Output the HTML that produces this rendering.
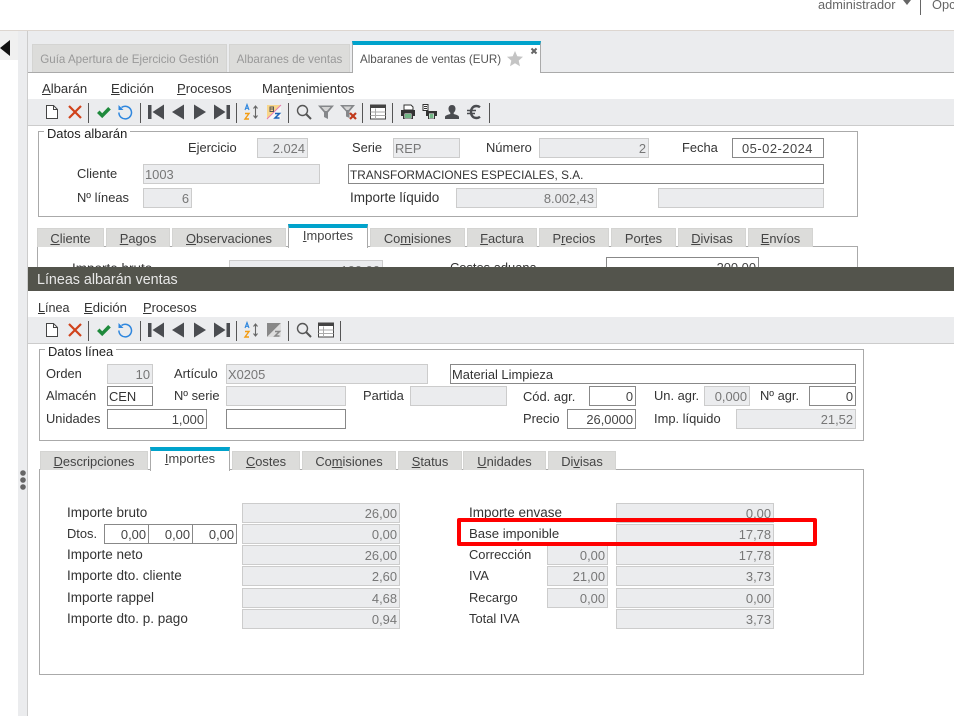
<!DOCTYPE html>
<html><head><meta charset="utf-8"><style>
html,body{margin:0;padding:0;background:#fff}
#p{position:relative;width:954px;height:716px;overflow:hidden;background:#fff;font-family:"Liberation Sans",sans-serif;font-size:12.9px;color:#333}
#p div{position:absolute;box-sizing:border-box}
.l{line-height:16px;white-space:nowrap;height:16px;margin-top:1px}
.i{font-size:13.5px}
.f,.w{height:20px;line-height:20px;border:1px solid #ccc;background:#ebecee;color:#777;padding:0 2px 0 1px;text-align:right;white-space:nowrap;overflow:hidden}
.w{background:#fff;border-color:#888;color:#444}
.tl{text-align:left}
.t,.a{text-align:center;white-space:nowrap;line-height:20px;color:#444}
.t{background:#dcdcda;border:1px solid #d4d4d2;border-bottom:0;height:19px}
.a{background:#fff;border:1px solid #aaa;border-top:4px solid #00a3cc;border-bottom:0;height:24px;line-height:16px}
.g{border:1px solid #aaa}
.m{line-height:16px;color:#333;white-space:nowrap;font-size:13.1px}
.s{font-size:11.6px}
svg{position:absolute;left:0;top:0}
</style></head><body><div id="p">

<div style="left:0;top:30px;width:954px;height:1px;background:#ddd6d0"></div>
<div style="left:0;top:31px;width:18px;height:29px;background:#f0f0f0"></div>
<div style="left:18px;top:31px;width:9px;height:685px;background:#ebecee"></div>
<div style="left:27px;top:31px;width:1px;height:685px;background:#ccc"></div>
<div style="left:28px;top:31px;width:926px;height:41px;background:#ebecee"></div>
<div style="left:28px;top:72px;width:926px;height:1px;background:#aaa"></div>
<div style="left:28px;top:99px;width:926px;height:26px;background:#ebecee"></div>
<div style="left:28px;top:125px;width:926px;height:1px;background:#ccc"></div>

<div class="l" style="left:818px;top:-4px;color:#666;font-size:12.8px">administrador</div>
<div style="left:920px;top:0;width:1px;height:15px;background:#666"></div>
<div class="l" style="left:932px;top:-4px;color:#666;font-size:12.8px">Opc</div>

<div class="t s" style="left:32px;top:44px;width:195px;height:28px;line-height:30px;color:#999">Guía Apertura de Ejercicio Gestión</div>
<div class="t s" style="left:229px;top:44px;width:121px;height:28px;line-height:30px;color:#999">Albaranes de ventas</div>
<div style="left:352px;top:41px;width:189px;height:32px;background:#fff;border:1px solid #aaa;border-top:4px solid #00a3cc;border-bottom:0"></div>
<div class="l s" style="left:360px;top:51px;color:#555">Albaranes de ventas (EUR)</div>

<div class="m" style="left:42px;top:81px"><u>A</u>lbarán</div>
<div class="m" style="left:111px;top:81px"><u>E</u>dición</div>
<div class="m" style="left:177px;top:81px"><u>P</u>rocesos</div>
<div class="m" style="left:262px;top:81px">Man<u>t</u>enimientos</div>

<!-- Datos albaran -->
<div class="g" style="left:38px;top:131px;width:820px;height:86px"></div>
<div class="l" style="left:44px;top:125px;padding:0 3px;background:#fff;color:#222">Datos albarán</div>
<div class="l" style="left:188px;top:139px">Ejercicio</div>
<div class="f" style="left:257px;top:138px;width:51px">2.024</div>
<div class="l" style="left:352px;top:139px">Serie</div>
<div class="f tl" style="left:393px;top:138px;width:67px">REP</div>
<div class="l" style="left:486px;top:139px">Número</div>
<div class="f" style="left:539px;top:138px;width:110px">2</div>
<div class="l" style="left:682px;top:139px">Fecha</div>
<div class="w" style="left:732px;top:138px;width:92px;text-align:center;letter-spacing:.5px">05-02-2024</div>
<div class="l" style="left:77px;top:165px">Cliente</div>
<div class="f tl" style="left:143px;top:164px;width:177px">1003</div>
<div class="w tl" style="left:348px;top:164px;width:476px;color:#333;font-size:11.8px">TRANSFORMACIONES ESPECIALES, S.A.</div>
<div class="l" style="left:77px;top:189px">Nº líneas</div>
<div class="f" style="left:143px;top:188px;width:49px">6</div>
<div class="l i" style="left:350px;top:189px">Importe líquido</div>
<div class="f" style="left:456px;top:188px;width:141px">8.002,43</div>
<div class="f" style="left:658px;top:188px;width:166px"></div>

<!-- Tabs 2 -->
<div class="g" style="left:37px;top:246px;width:821px;height:40px"></div>
<div class="t" style="left:37px;top:228px;width:67px"><u>C</u>liente</div>
<div class="t" style="left:106px;top:228px;width:64px"><u>P</u>agos</div>
<div class="t" style="left:172px;top:228px;width:114px"><u>O</u>bservaciones</div>
<div class="a" style="left:288px;top:224px;width:80px"><u>I</u>mportes</div>
<div class="t" style="left:370px;top:228px;width:95px">Co<u>m</u>isiones</div>
<div class="t" style="left:467px;top:228px;width:70px"><u>F</u>actura</div>
<div class="t" style="left:539px;top:228px;width:70px">P<u>r</u>ecios</div>
<div class="t" style="left:611px;top:228px;width:65px">Por<u>t</u>es</div>
<div class="t" style="left:678px;top:228px;width:68px"><u>D</u>ivisas</div>
<div class="t" style="left:748px;top:228px;width:65px"><u>E</u>nvíos</div>
<div class="l i" style="left:72px;top:260px">Importe bruto</div>
<div class="f" style="left:229px;top:260px;width:154px">100,00</div>
<div class="l" style="left:450px;top:259px">Costes aduana</div>
<div class="w" style="left:606px;top:257px;width:153px">200,00</div>

<!-- Lower window -->
<div style="left:28px;top:267px;width:926px;height:449px;background:#fff"></div>
<div style="left:28px;top:267px;width:926px;height:24px;background:#53544c"></div>
<div style="left:37px;top:272px;color:#e8e8e8;font-size:14.3px;line-height:16px;white-space:nowrap">Líneas albarán ventas</div>
<div class="m" style="left:38px;top:300px;font-size:12.6px"><u>L</u>ínea</div>
<div class="m" style="left:84px;top:300px"><u>E</u>dición</div>
<div class="m" style="left:143px;top:300px;font-size:12.9px"><u>P</u>rocesos</div>
<div style="left:28px;top:317px;width:926px;height:26px;background:#ebecee"></div>
<div style="left:28px;top:343px;width:926px;height:1px;background:#ccc"></div>

<div class="g" style="left:39px;top:349px;width:825px;height:92px"></div>
<div class="l" style="left:45px;top:343px;padding:0 3px;background:#fff;color:#222">Datos línea</div>
<div class="l" style="left:46px;top:365px">Orden</div>
<div class="f" style="left:107px;top:364px;width:46px">10</div>
<div class="l" style="left:174px;top:365px">Artículo</div>
<div class="f tl" style="left:226px;top:364px;width:202px">X0205</div>
<div class="w tl" style="left:450px;top:364px;width:406px;color:#333">Material Limpieza</div>
<div class="l" style="left:46px;top:387px">Almacén</div>
<div class="w tl" style="left:107px;top:386px;width:46px;color:#333">CEN</div>
<div class="l" style="left:174px;top:387px">Nº serie</div>
<div class="f" style="left:226px;top:386px;width:120px"></div>
<div class="l" style="left:363px;top:387px">Partida</div>
<div class="f" style="left:410px;top:386px;width:97px"></div>
<div class="l" style="left:523px;top:388px">Cód. agr.</div>
<div class="w" style="left:589px;top:386px;width:47px">0</div>
<div class="l" style="left:654px;top:387px">Un. agr.</div>
<div class="f" style="left:704px;top:386px;width:46px">0,000</div>
<div class="l" style="left:760px;top:387px">Nº agr.</div>
<div class="w" style="left:809px;top:386px;width:47px">0</div>
<div class="l" style="left:46px;top:410px">Unidades</div>
<div class="w" style="left:107px;top:409px;width:100px">1,000</div>
<div class="w" style="left:226px;top:409px;width:120px"></div>
<div class="l" style="left:523px;top:410px">Precio</div>
<div class="w" style="left:567px;top:409px;width:69px">26,0000</div>
<div class="l" style="left:654px;top:410px">Imp. líquido</div>
<div class="f" style="left:736px;top:409px;width:120px">21,52</div>

<!-- Tabs 3 -->
<div class="g" style="left:39px;top:469px;width:825px;height:206px"></div>
<div class="t" style="left:40px;top:451px;width:108px"><u>D</u>escripciones</div>
<div class="a" style="left:150px;top:447px;width:80px"><u>I</u>mportes</div>
<div class="t" style="left:232px;top:451px;width:68px"><u>C</u>ostes</div>
<div class="t" style="left:302px;top:451px;width:94px">Co<u>m</u>isiones</div>
<div class="t" style="left:398px;top:451px;width:64px"><u>S</u>tatus</div>
<div class="t" style="left:463px;top:451px;width:83px"><u>U</u>nidades</div>
<div class="t" style="left:548px;top:451px;width:68px">Di<u>v</u>isas</div>

<!-- Left amounts -->
<div class="l i" style="left:67px;top:504px">Importe bruto</div>
<div class="f" style="left:242px;top:503px;width:158px">26,00</div>
<div class="l" style="left:67px;top:525px">Dtos.</div>
<div class="w" style="left:104px;top:524px;width:45px">0,00</div>
<div class="w" style="left:148px;top:524px;width:45px">0,00</div>
<div class="w" style="left:192px;top:524px;width:45px">0,00</div>
<div class="f" style="left:242px;top:524px;width:158px">0,00</div>
<div class="l i" style="left:67px;top:546px">Importe neto</div>
<div class="f" style="left:242px;top:545px;width:158px">26,00</div>
<div class="l i" style="left:67px;top:567px">Importe dto. cliente</div>
<div class="f" style="left:242px;top:566px;width:158px">2,60</div>
<div class="l i" style="left:67px;top:589px">Importe rappel</div>
<div class="f" style="left:242px;top:588px;width:158px">4,68</div>
<div class="l i" style="left:67px;top:610px">Importe dto. p. pago</div>
<div class="f" style="left:242px;top:609px;width:158px">0,94</div>

<!-- Right amounts -->
<div class="l i" style="left:469px;top:504px">Importe envase</div>
<div class="f" style="left:616px;top:503px;width:158px">0,00</div>
<div class="l" style="left:469px;top:525px;font-size:13.2px">Base imponible</div>
<div class="f" style="left:616px;top:524px;width:158px">17,78</div>
<div class="l" style="left:469px;top:546px">Corrección</div>
<div class="f" style="left:547px;top:545px;width:61px">0,00</div>
<div class="f" style="left:616px;top:545px;width:158px">17,78</div>
<div class="l" style="left:469px;top:567px">IVA</div>
<div class="f" style="left:547px;top:566px;width:61px">21,00</div>
<div class="f" style="left:616px;top:566px;width:158px">3,73</div>
<div class="l" style="left:469px;top:589px">Recargo</div>
<div class="f" style="left:547px;top:588px;width:61px">0,00</div>
<div class="f" style="left:616px;top:588px;width:158px">0,00</div>
<div class="l" style="left:469px;top:610px">Total IVA</div>
<div class="f" style="left:616px;top:609px;width:158px">3,73</div>

<div style="left:457px;top:518px;width:360px;height:28px;border:4px solid #f00;border-radius:2px"></div>

<svg width="954" height="716" viewBox="0 0 954 716">
<defs>
<symbol id="doc" viewBox="0 0 16 16"><path d="M2.500 1.500h7l4 4v9h-11z" fill="#fff" stroke="#444"/><path d="M9.500 1.500v4h4" fill="none" stroke="#444"/></symbol>
<symbol id="x" viewBox="0 0 16 16"><path d="M2 2l12 12M14 2L2 14" stroke="#d0421b" stroke-width="2.200" fill="none"/></symbol>
<symbol id="ok" viewBox="0 0 16 16"><path d="M1 9l2.500-2.500 2.700 2.700 6-6.200 2.600 2.500-8.600 8.600z" fill="#1f8a3c"/></symbol>
<symbol id="un" viewBox="0 0 16 16"><path d="M4.500 3.500a6.300 6.300 0 1 1-2.600 5" fill="none" stroke="#2e86de" stroke-width="1.500"/><path d="M1.500 1v5h5z" fill="#2e86de"/></symbol>
<symbol id="fi" viewBox="0 0 16 16"><path d="M0 1h3.500v14H0zM16 .5v15L4.500 8z" fill="#4a4c50"/></symbol>
<symbol id="pr" viewBox="0 0 16 16"><path d="M14 .5v15L2 8z" fill="#4a4c50"/></symbol>
<symbol id="ne" viewBox="0 0 16 16"><path d="M2 .5v15L14 8z" fill="#4a4c50"/></symbol>
<symbol id="la" viewBox="0 0 16 16"><path d="M12.500 1H16v14h-3.500zM0 .5v15L11.500 8z" fill="#4a4c50"/></symbol>
<symbol id="az" viewBox="0 0 18 18"><path d="M2 7l2-5.500 2 5.500M2.800 5.300h2.400" fill="none" stroke="#2e86de" stroke-width="1.100"/><path d="M2 10.500h4l-4 5.500h4" fill="none" stroke="#f39c12" stroke-width="1.400"/><path d="M12.500 3v12M10.500 5.500l2-2.500 2 2.500M10.500 12.500l2 2.500 2-2.500" fill="none" stroke="#666" stroke-width="1.100"/></symbol>
<symbol id="za" viewBox="0 0 16 16"><path d="M1 1h14L1 15z" fill="#f8d68a"/><path d="M15 1v14H1z" fill="#f5f5f5"/><path d="M1 15L15 1" stroke="#e87ab0" stroke-width="1"/><path d="M4 3h3.500v4.500H4zM4 5h3" fill="none" stroke="#555" stroke-width="1"/><path d="M9 9.500h4.500L9 14h4.500" fill="none" stroke="#1a62b8" stroke-width="1.500"/></symbol>
<symbol id="zg" viewBox="0 0 16 16"><path d="M1 1h14L1 15z" fill="#888"/><path d="M15 1v14H1z" fill="#ddd"/><path d="M9 9.500h4.500L9 14h4.500" fill="none" stroke="#888" stroke-width="1.500"/></symbol>
<symbol id="se" viewBox="0 0 16 16"><circle cx="6.500" cy="6.500" r="5" fill="none" stroke="#555" stroke-width="1.400"/><path d="M10 10l5 5" stroke="#555" stroke-width="2"/></symbol>
<symbol id="fl" viewBox="0 0 16 16"><path d="M0 1.500h16L10 8.500V15l-4-2V8.500z" fill="#85878a"/><path d="M3.500 3h9L9 7H7z" fill="#d4d4d4"/></symbol>
<symbol id="fx" viewBox="0 0 18 18"><path d="M0 2h15L9.500 8.500V15l-3.500-1.500v-5z" fill="#85878a"/><path d="M3.500 3.500h8L8.500 7h-2z" fill="#d4d4d4"/><path d="M10 10l6 6M16 10l-6 6" stroke="#c0391b" stroke-width="2.200"/></symbol>
<symbol id="tb" viewBox="0 0 16 16"><rect x=".5" y="1" width="15" height="14" fill="#fff" stroke="#444"/><path d="M.5 1h15v3H.5z" fill="#444"/><path d="M.5 8h15M.5 11.500h15M5.500 4.500V15" stroke="#aaa" fill="none"/></symbol>
<symbol id="pt" viewBox="0 0 16 16"><path d="M4 1h7l2 2v3H4z" fill="#fff" stroke="#333"/><path d="M1 6h14v6h-2v3H3v-3H1z" fill="#333"/><rect x="4.500" y="9.500" width="7" height="5" fill="#fff"/><path d="M5 11h6M5 13h6" stroke="#1f8a3c" stroke-width="1.200"/></symbol>
<symbol id="p2" viewBox="0 0 16 16"><path d="M1 .5h5v6H1z" fill="#fff" stroke="#333"/><path d="M2 2.500h3M2 4.500h3" stroke="#333"/><path d="M4 7h11v5h-2v3H6v-3H4z" fill="#333"/><rect x="7" y="9.500" width="5" height="5" fill="#fff"/><path d="M7.500 11h4M7.500 13h4" stroke="#1f8a3c" stroke-width="1.200"/></symbol>
<symbol id="us" viewBox="0 0 16 16"><path d="M8 1c2.300 0 3.500 1.700 3.500 3.800 0 1.800-.8 3.200-1.800 4v1.200c2 .6 5.300 1.300 5.300 3V15H1v-2c0-1.700 3.300-2.400 5.300-3V8.800c-1-.8-1.800-2.200-1.800-4C4.500 2.700 5.700 1 8 1z" fill="#4a4c50"/></symbol>
<symbol id="eu" viewBox="0 0 16 16"><path d="M14 3.200C12.800 2.300 11.500 2 10.300 2 7 2 5 4.600 5 8s2 6 5.300 6c1.200 0 2.500-.3 3.700-1.200" fill="none" stroke="#4a4c50" stroke-width="2.400"/><path d="M1 6.500h9M1 9.500h8" stroke="#4a4c50" stroke-width="1.600"/></symbol>
</defs>
<path d="M0 48l10-8v16z" fill="#111"/>
<circle cx="23" cy="473" r="2.800" fill="#666"/><circle cx="23" cy="480" r="2.800" fill="#666"/><circle cx="23" cy="487" r="2.800" fill="#666"/>
<path d="M515 51l2.300 5.300 5.700.5-4.300 3.800 1.300 5.600-5-3-5 3 1.300-5.600-4.300-3.800 5.700-.5z" fill="#c4c4c4"/>
<path d="M531.500 48.500l5 5M536.500 48.500l-5 5" stroke="#666" stroke-width="2"/>
<path d="M903 0h8l-4 5z" fill="#666"/>

<g stroke="#555" stroke-width="1">
<path d="M88.500 103v20M140.500 103v20M236.500 103v20M288.500 103v20M362.500 103v20M392.500 103v20M489.500 103v20"/>
<path d="M88.500 321v20M140.500 321v20M236.500 321v20M288.500 321v20M340.500 321v20"/>
</g>
<use href="#doc" x="44" y="104" width="16" height="16"/><use href="#x" x="67" y="104" width="16" height="16"/>
<use href="#ok" x="96" y="104" width="16" height="16"/><use href="#un" x="117" y="104" width="16" height="16"/>
<use href="#fi" x="148" y="104" width="16" height="16"/><use href="#pr" x="170" y="104" width="16" height="16"/>
<use href="#ne" x="192" y="104" width="16" height="16"/><use href="#la" x="214" y="104" width="16" height="16"/>
<use href="#az" x="243" y="103" width="18" height="18"/><use href="#za" x="266" y="104" width="16" height="16"/>
<use href="#se" x="296" y="104" width="16" height="16"/><use href="#fl" x="318" y="104" width="16" height="16"/>
<use href="#fx" x="340" y="103" width="18" height="18"/><use href="#tb" x="370" y="104" width="16" height="16"/>
<use href="#pt" x="400" y="104" width="16" height="16"/><use href="#p2" x="422" y="104" width="16" height="16"/>
<use href="#us" x="444" y="104" width="16" height="16"/><use href="#eu" x="466" y="104" width="16" height="16"/>

<use href="#doc" x="44" y="322" width="16" height="16"/><use href="#x" x="67" y="322" width="16" height="16"/>
<use href="#ok" x="96" y="322" width="16" height="16"/><use href="#un" x="117" y="322" width="16" height="16"/>
<use href="#fi" x="148" y="322" width="16" height="16"/><use href="#pr" x="170" y="322" width="16" height="16"/>
<use href="#ne" x="192" y="322" width="16" height="16"/><use href="#la" x="214" y="322" width="16" height="16"/>
<use href="#az" x="243" y="321" width="18" height="18"/><use href="#zg" x="266" y="322" width="16" height="16"/>
<use href="#se" x="296" y="322" width="16" height="16"/><use href="#tb" x="318" y="322" width="16" height="16"/>
</svg>
</div></body></html>
